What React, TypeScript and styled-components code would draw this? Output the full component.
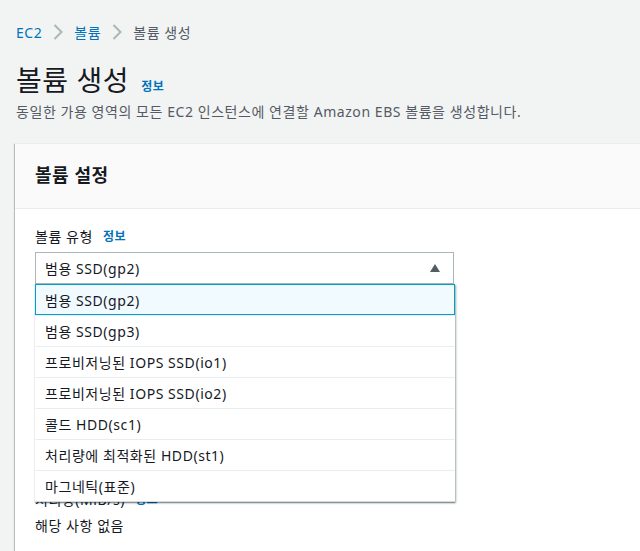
import styled, { createGlobalStyle } from 'styled-components';

const GlobalStyle = createGlobalStyle`
    html, body {
        margin: 0;
        padding: 0;
        background: #f2f3f3;
        overflow: hidden;
    }
    body {
        font-family: "Noto Sans", "Noto Sans CJK KR", sans-serif;
        font-size: 14px;
        letter-spacing: 0.04em;
        color: #16191f;
    }
`

const Page = styled.div`
    padding: 21px 0 0 16px;
    width: 680px;
`
const Crumbs = styled.nav`
    display: flex;
    align-items: center;
    gap: 10px;
    height: 22px;
    font-size: 14px;
`
const CrumbLink = styled.span`
    color: #0073bb;
`
const CrumbCurrent = styled.span`
    color: #545b64;
`
const Chevron = styled.svg`
    width: 12px;
    height: 18px;
`
const TitleRow = styled.div`
    display: flex;
    align-items: baseline;
    gap: 12px;
    margin-top: 19px;
`
const Title = styled.h1`
    margin: 0;
    font-size: 28px;
    font-weight: 400;
    line-height: 36px;
    color: #16191f;
`
const Info = styled.span`
    color: #0073bb;
    font-size: 12px;
    font-weight: 700;
`
const Desc = styled.p`
    margin: 3px 0 0;
    color: #545b64;
    font-size: 14px;
    line-height: 22px;
`
const Card = styled.section`
    margin-top: 20px;
    margin-left: -1px;
    background: #fff;
    border-top: 1px solid #eaeded;
    box-shadow: -1px 1px 1px 0 rgba(0, 28, 36, 0.2), 0 1px 1px 0 rgba(0, 28, 36, 0.3);
`
const CardHeader = styled.div`
    height: 64px;
    display: flex;
    align-items: center;
    padding-left: 20px;
    background: #fafafa;
    border-bottom: 1px solid #eaeded;
`
const CardTitle = styled.h2`
    margin: 0 0 4px;
    font-size: 18px;
    font-weight: 700;
    color: #16191f;
`
const CardBody = styled.div`
    padding: 17px 20px 40px;
    display: flex;
    flex-direction: column;
    gap: 23px;
`
const Field = styled.div`
    display: flex;
    flex-direction: column;
    gap: 4px;
    width: 419px;
`
const Label = styled.label`
    display: flex;
    gap: 10px;
    line-height: 22px;
    color: #16191f;
`
const SelectWrap = styled.div`
    position: relative;
`
const SelectBox = styled.div`
    height: 30px;
    border: 1px solid #aab7b8;
    display: flex;
    align-items: center;
    justify-content: space-between;
    padding: 0 12px 0 9px;
    background: #fff;
`
const Input = styled.div`
    height: 30px;
    border: 1px solid #aab7b8;
`
const Value = styled.div`
    line-height: 22px;
    color: #16191f;
`
const Menu = styled.ul`
    position: absolute;
    top: 32px;
    left: 0;
    right: -1px;
    margin: 0;
    padding: 0;
    list-style: none;
    background: #fff;
    border-left: 1px solid #eaeded;
    border-bottom: 1px solid #d5dbdb;
    box-shadow: 1px 1px 2px 0 rgba(0, 28, 36, 0.35), 0 1px 1px 0 rgba(0, 28, 36, 0.3);
    z-index: 2;
`
const Option = styled.li<{ $selected?: boolean }>`
    box-sizing: border-box;
    height: 31px;
    display: flex;
    align-items: center;
    padding-left: 9px;
    margin-left: -1px;
    border: 1px solid ${p => (p.$selected ? '#00a1c9' : 'transparent')};
    border-top-color: ${p => (p.$selected ? '#00a1c9' : '#eaeded')};
    background: ${p => (p.$selected ? '#f1faff' : '#fff')};
    &:first-child {
        border-top-color: ${p => (p.$selected ? '#00a1c9' : 'transparent')};
    }
`

const options = [
    '범용 SSD(gp2)',
    '범용 SSD(gp3)',
    '프로비저닝된 IOPS SSD(io1)',
    '프로비저닝된 IOPS SSD(io2)',
    '콜드 HDD(sc1)',
    '처리량에 최적화된 HDD(st1)',
    '마그네틱(표준)',
]

function ChevronIcon() {
    return (
        <Chevron viewBox="0 0 12 18">
            <path d="M2.5 2l7 7-7 7" fill="none" stroke="#aab7b8" strokeWidth="2" />
        </Chevron>
    );
}

export default function App() {
    return (
        <>
            <GlobalStyle />
            <Page>
                <Crumbs>
                    <CrumbLink>EC2</CrumbLink>
                    <ChevronIcon />
                    <CrumbLink>볼륨</CrumbLink>
                    <ChevronIcon />
                    <CrumbCurrent>볼륨 생성</CrumbCurrent>
                </Crumbs>
                <TitleRow>
                    <Title>볼륨 생성</Title>
                    <Info>정보</Info>
                </TitleRow>
                <Desc>동일한 가용 영역의 모든 EC2 인스턴스에 연결할 Amazon EBS 볼륨을 생성합니다.</Desc>
                <Card>
                    <CardHeader>
                        <CardTitle>볼륨 설정</CardTitle>
                    </CardHeader>
                    <CardBody>
                        <Field>
                            <Label>볼륨 유형 <Info>정보</Info></Label>
                            <SelectWrap>
                                <SelectBox>
                                    <span>범용 SSD(gp2)</span>
                                    <svg width="12" height="10" viewBox="0 0 12 10">
                                        <path d="M6 1l5 8H1z" fill="#545b64" />
                                    </svg>
                                </SelectBox>
                                <Menu>
                                    {options.map((o, i) => (
                                        <Option key={o} $selected={i === 0}>{o}</Option>
                                    ))}
                                </Menu>
                            </SelectWrap>
                        </Field>
                        <Field>
                            <Input />
                            <Input />
                        </Field>
                        <Field>
                            <Input />
                            <Input />
                        </Field>
                        <Field>
                            <Label>처리량(MiB/s) <Info>정보</Info></Label>
                            <Value>해당 사항 없음</Value>
                        </Field>
                    </CardBody>
                </Card>
            </Page>
        </>
    );
}
